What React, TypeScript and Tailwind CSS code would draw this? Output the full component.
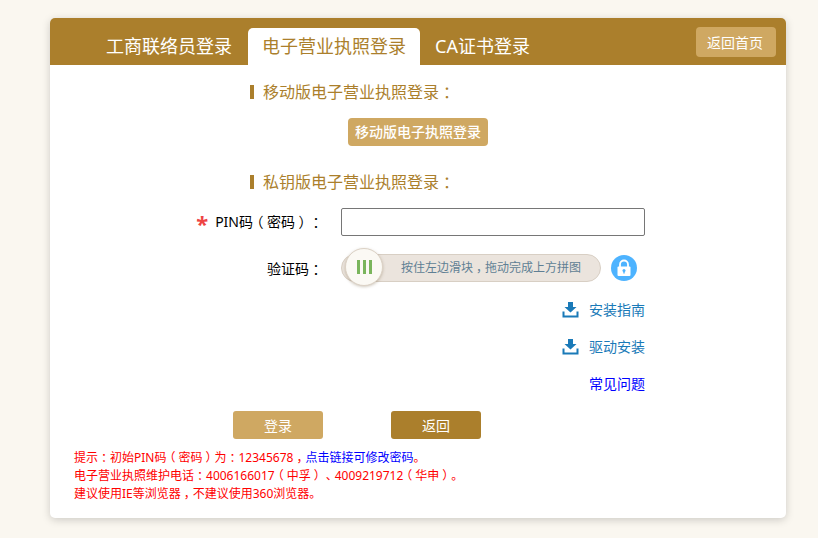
import React from 'react'

// full-width punctuation sits in the middle of its cell in the reference font
function P({ c }: { c: string }) {
  return <span className="inline-block w-[1em] text-center [font-feature-settings:'halt']">{c}</span>
}

function DownloadIcon() {
  return (
    <svg width="17" height="16" viewBox="0 0 17 16" className="shrink-0" aria-hidden="true">
      <path d="M6 0h5v5h3.500L8.500 10.500 2.500 5H6z" fill="#1a7ab8" />
      <path d="M0.500 9.500h2V13.500h12V9.500h2V15.500h-16z" fill="#1a7ab8" />
    </svg>
  )
}

function LockIcon() {
  return (
    <svg width="26" height="26" viewBox="0 0 26 26" className="ml-[10px] shrink-0" aria-hidden="true">
      <circle cx="13" cy="13" r="13" fill="#4db3ff" />
      <path d="M9 12V9.500a4 4 0 0 1 8 0V12" fill="none" stroke="#fff" strokeWidth="1.800" />
      <rect x="6.500" y="11.500" width="13" height="9.500" rx="1" fill="#fff" />
      <circle cx="13" cy="15.500" r="1.500" fill="#4db3ff" />
      <rect x="12.300" y="15.500" width="1.400" height="3" fill="#4db3ff" />
    </svg>
  )
}

function SectionTitle({ children }: { children: React.ReactNode }) {
  return (
    <div className="ml-[200px] flex h-[20px] items-center text-[16px] leading-[20px] text-[#ab7f2c]">
      <span className="mr-[9px] h-[14px] w-[4px] bg-[#ab7f2c]" />
      <span>
        {children}
        <P c="：" />
      </span>
    </div>
  )
}

function DocLink({ label }: { label: string }) {
  return (
    <a href="#" className="flex h-[37px] items-center justify-end gap-[10px] text-[14px] text-[#1a7ab8]">
      <DownloadIcon />
      {label}
    </a>
  )
}

export default function App() {
  return (
    <div
      className="h-[538px] overflow-hidden bg-[#faf7f0] pt-[18px] pl-[50px] [text-spacing-trim:space-all]"
      style={{ fontFamily: '"Noto Sans", "Noto Sans CJK SC", "Liberation Sans", sans-serif' }}
    >
      <div className="h-[500px] w-[736px] rounded-[5px] bg-white shadow-[0_2px_8px_rgba(0,0,0,0.18)]">
        {/* Header */}
        <div className="flex h-[47px] items-end rounded-t-[5px] bg-[#ab7f2c] pl-[42px]">
          <a href="#" className="flex h-[37px] items-center px-[14px] text-[18px] text-white">
            工商联络员登录
          </a>
          <a
            href="#"
            className="ml-[2px] flex h-[37px] items-center rounded-t-[5px] bg-white px-[14px] text-[18px] text-[#ab7f2c]"
          >
            电子营业执照登录
          </a>
          <a href="#" className="flex h-[37px] items-center px-[15px] text-[18px] text-white">
            CA证书登录
          </a>
          <a
            href="#"
            className="mr-[10px] mb-[8px] ml-auto flex h-[30px] w-[80px] items-center justify-center rounded-[4px] bg-[#cfa862] pr-[2px] text-[14px] text-white"
          >
            返回首页
          </a>
        </div>

        {/* Body */}
        <div className="pt-[17px]">
          <SectionTitle>移动版电子营业执照登录</SectionTitle>
          <a
            href="#"
            className="mt-[16px] ml-[298px] flex h-[28px] w-[140px] items-center justify-center rounded-[4px] bg-[#cfa862] pb-[2px] text-[14px] font-medium text-white"
          >
            移动版电子执照登录
          </a>
          <div className="mt-[26px]">
            <SectionTitle>私钥版电子营业执照登录</SectionTitle>
          </div>

          <div className="mt-[16px] grid grid-cols-[271px_304px] gap-x-[20px] gap-y-[18px] text-[14px] text-black">
            <div className="-mr-[2px] flex items-center justify-end pb-[2px]">
              <span className="mr-[7px] h-[16px] text-[22px] leading-[21px] font-bold text-[#ee4444]">*</span>
              <span>
                PIN码<P c="（" />密码<P c="）" /><P c="：" />
              </span>
            </div>
            <input className="h-[28px] rounded-[2px] border border-[#767676] bg-white" />

            <div className="-mr-[2px] flex items-center justify-end">
              <span>
                验证码<P c="：" />
              </span>
            </div>
            <div className="flex items-center">
              <div className="relative flex h-[28px] w-[260px] items-center rounded-full border border-[#d8cfc4] bg-[#ebe4dd] pl-[59px] text-[12px] text-[#5f7f94]">
                <span>
                  按住左边滑块<P c="，" />拖动完成上方拼图
                </span>
                <div className="absolute top-[-7px] left-[3px] flex h-[38px] w-[38px] items-center justify-center gap-[3px] rounded-full border border-[#dcd2c6] bg-[#fbf9f4] shadow-[0_1px_3px_rgba(120,100,70,0.35)]">
                  <span className="h-[14px] w-[3px] bg-[#7ab55c]" />
                  <span className="h-[14px] w-[3px] bg-[#7ab55c]" />
                  <span className="h-[14px] w-[3px] bg-[#7ab55c]" />
                </div>
              </div>
              <LockIcon />
            </div>
          </div>

          <div className="mt-[9px] ml-[291px] w-[304px]">
            <DocLink label="安装指南" />
            <DocLink label="驱动安装" />
            <a href="#" className="flex h-[37px] items-center justify-end text-[14px] text-[#0000ff]">
              常见问题
            </a>
          </div>

          <div className="mt-[9px] ml-[183px] flex gap-[68px] text-[14px] text-white">
            <button className="h-[28px] w-[90px] rounded-[3px] bg-[#cfa862]">登录</button>
            <button className="h-[28px] w-[90px] rounded-[3px] bg-[#ab7f2c]">返回</button>
          </div>

          <div className="mt-[10px] ml-[24px] text-[12px] leading-[18px] text-[#ff0000]">
            <p>
              提示<P c="：" />初始PIN码<P c="（" />密码<P c="）" />为<P c="：" />12345678<P c="，" />
              <a href="#" className="text-[#0000ff]">点击链接可修改密码</a>。
            </p>
            <p>
              电子营业执照维护电话<P c="：" />4006166017<P c="（" />中孚<P c="）" /><P c="、" />4009219712<P c="（" />华申<P c="）" />。
            </p>
            <p>
              建议使用IE等浏览器<P c="，" />不建议使用360浏览器。
            </p>
          </div>
        </div>
      </div>
    </div>
  )
}
